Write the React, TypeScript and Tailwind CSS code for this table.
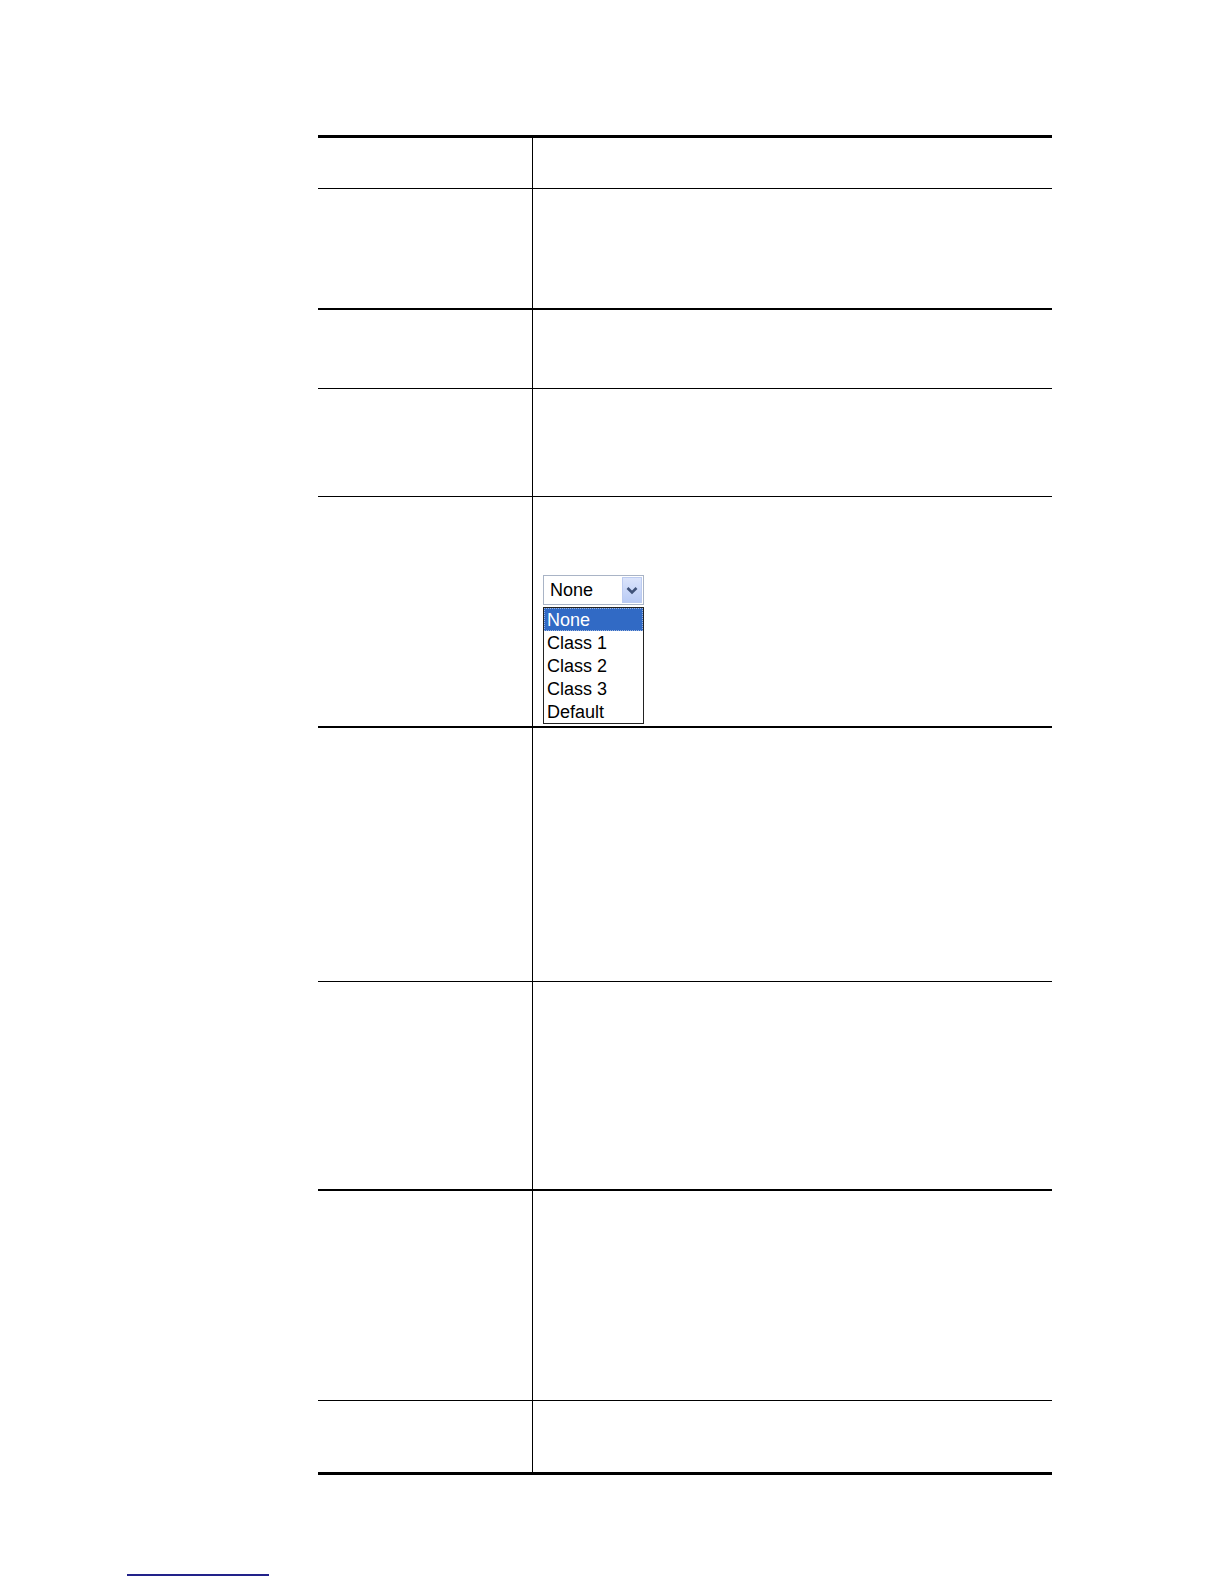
const rows = [
  { cls: "h-[53px] border-t-[3px]" },
  { cls: "h-[120px] border-t" },
  { cls: "h-[80px] border-t-2" },
  { cls: "h-[108px] border-t" },
  { cls: "h-[230px] border-t", select: true },
  { cls: "h-[255px] border-t-2" },
  { cls: "h-[208px] border-t" },
  { cls: "h-[211px] border-t-2" },
  { cls: "h-[72px] border-t" },
];

const options = ["None", "Class 1", "Class 2", "Class 3", "Default"];

function ClassSelect() {
  return (
    <div className="w-[101px] font-['Liberation_Sans',Arial,sans-serif] text-[18px] text-black">
      <div className="flex h-[30px] items-center border border-[#a9b4c6] bg-white">
        <span className="flex-1 pl-[6px] leading-none">None</span>
        <span className="mr-[1px] flex h-[26px] w-[20px] items-center justify-center border border-[#bccbf0] bg-gradient-to-b from-[#dbe4fb] to-[#b9cbf5]">
          <svg width="12" height="9" viewBox="0 0 12 9">
            <path d="M1.5 2 L6 6.5 L10.5 2" fill="none" stroke="#3f5279" strokeWidth="2.6" />
          </svg>
        </span>
      </div>
      <ul className="mt-[2px] border border-[#222]">
        {options.map((o, i) => (
          <li
            key={o}
            className={
              i === 0
                ? "h-[23px] pl-[3px] leading-[24px] bg-[#316ac5] text-white outline-1 outline-dotted outline-[#9fb6de] -outline-offset-1"
                : "h-[23px] pl-[3px] leading-[24px]"
            }
          >
            {o}
          </li>
        ))}
      </ul>
    </div>
  );
}

export default function App() {
  return (
    <div className="relative h-[1584px] w-full bg-white">
      <div className="ml-[318px] w-[734px] pt-[135px]">
        {rows.map((r, i) => (
          <div key={i} className={`flex border-black ${r.cls}`}>
            <div className="w-[215px] shrink-0 border-r border-black" />
            <div className="flex-1 pl-[10px] pt-[78px]">
              {r.select && <ClassSelect />}
            </div>
          </div>
        ))}
        <div className="h-[3px] bg-black" />
      </div>
      <div className="ml-[127px] mt-[99px] h-[2px] w-[142px] bg-[#22228a]" />
    </div>
  );
}
